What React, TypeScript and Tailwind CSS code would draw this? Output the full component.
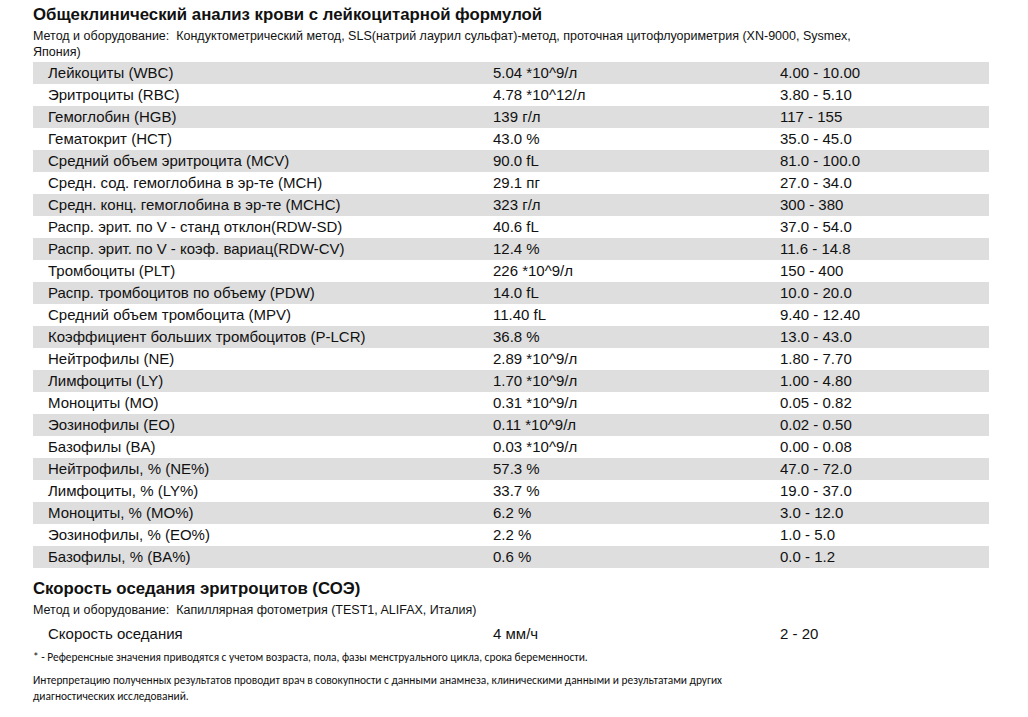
const rows: [string, string, string][] = [
  ["Лейкоциты (WBC)", "5.04 *10^9/л", "4.00 - 10.00"],
  ["Эритроциты (RBC)", "4.78 *10^12/л", "3.80 - 5.10"],
  ["Гемоглобин (HGB)", "139 г/л", "117 - 155"],
  ["Гематокрит (HCT)", "43.0 %", "35.0 - 45.0"],
  ["Средний объем эритроцита (MCV)", "90.0 fL", "81.0 - 100.0"],
  ["Средн. сод. гемоглобина в эр-те (MCH)", "29.1 пг", "27.0 - 34.0"],
  ["Средн. конц. гемоглобина в эр-те (MCHC)", "323 г/л", "300 - 380"],
  ["Распр. эрит. по V - станд отклон(RDW-SD)", "40.6 fL", "37.0 - 54.0"],
  ["Распр. эрит. по V - коэф. вариац(RDW-CV)", "12.4 %", "11.6 - 14.8"],
  ["Тромбоциты (PLT)", "226 *10^9/л", "150 - 400"],
  ["Распр. тромбоцитов по объему (PDW)", "14.0 fL", "10.0 - 20.0"],
  ["Средний объем тромбоцита (MPV)", "11.40 fL", "9.40 - 12.40"],
  ["Коэффициент больших тромбоцитов (P-LCR)", "36.8 %", "13.0 - 43.0"],
  ["Нейтрофилы (NE)", "2.89 *10^9/л", "1.80 - 7.70"],
  ["Лимфоциты (LY)", "1.70 *10^9/л", "1.00 - 4.80"],
  ["Моноциты (MO)", "0.31 *10^9/л", "0.05 - 0.82"],
  ["Эозинофилы (EO)", "0.11 *10^9/л", "0.02 - 0.50"],
  ["Базофилы (BA)", "0.03 *10^9/л", "0.00 - 0.08"],
  ["Нейтрофилы, % (NE%)", "57.3 %", "47.0 - 72.0"],
  ["Лимфоциты, % (LY%)", "33.7 %", "19.0 - 37.0"],
  ["Моноциты, % (MO%)", "6.2 %", "3.0 - 12.0"],
  ["Эозинофилы, % (EO%)", "2.2 %", "1.0 - 5.0"],
  ["Базофилы, % (BA%)", "0.6 %", "0.0 - 1.2"],
];

function Row({ label, value, range, gray }: { label: string; value: string; range: string; gray: boolean }) {
  return (
    <div className={`flex h-[22px] items-center text-[15px] ${gray ? "bg-[#dedede]" : ""}`}>
      <div className="w-[460px] pl-[15px]">{label}</div>
      <div className="w-[287px]">{value}</div>
      <div>{range}</div>
    </div>
  );
}

export default function App() {
  return (
    <div className="min-h-[717px] w-[1028px] bg-white text-[#111] font-['Liberation_Sans',Arial,sans-serif]">
      <div className="w-[989px] pl-[33px] pt-[5px]">
        <h1 className="text-[16.8px] font-bold leading-[20px]">
          Общеклинический анализ крови с лейкоцитарной формулой
        </h1>
        <p className="mt-[3px] w-[830px] text-[12.5px] leading-[16px]">
          Метод и оборудование:&nbsp; Кондуктометрический метод, SLS(натрий лаурил сульфат)-метод, проточная цитофлуориметрия (XN-9000, Sysmex, Япония)
        </p>
        <div className="mt-[2px]">
          {rows.map((r, i) => (
            <Row key={r[0]} label={r[0]} value={r[1]} range={r[2]} gray={i % 2 === 0} />
          ))}
        </div>
        <h2 className="mt-[11px] text-[16.8px] font-bold leading-[20px]">Скорость оседания эритроцитов (СОЭ)</h2>
        <p className="mt-[3px] text-[12.5px] leading-[16px]">
          Метод и оборудование:&nbsp; Капиллярная фотометрия (TEST1, ALIFAX, Италия)
        </p>
        <div className="mt-[5px]">
          <Row label="Скорость оседания" value="4 мм/ч" range="2 - 20" gray={false} />
        </div>
        <div className="font-['Carlito','Open_Sans',sans-serif] text-[11.4px] leading-[16px]">
          <p className="mt-[4px]">* - Референсные значения приводятся с учетом возраста, пола, фазы менструального цикла, срока беременности.</p>
          <p className="mt-[7px] w-[700px]">
            Интерпретацию полученных результатов проводит врач в совокупности с данными анамнеза, клиническими данными и результатами других диагностических исследований.
          </p>
        </div>
      </div>
    </div>
  );
}
